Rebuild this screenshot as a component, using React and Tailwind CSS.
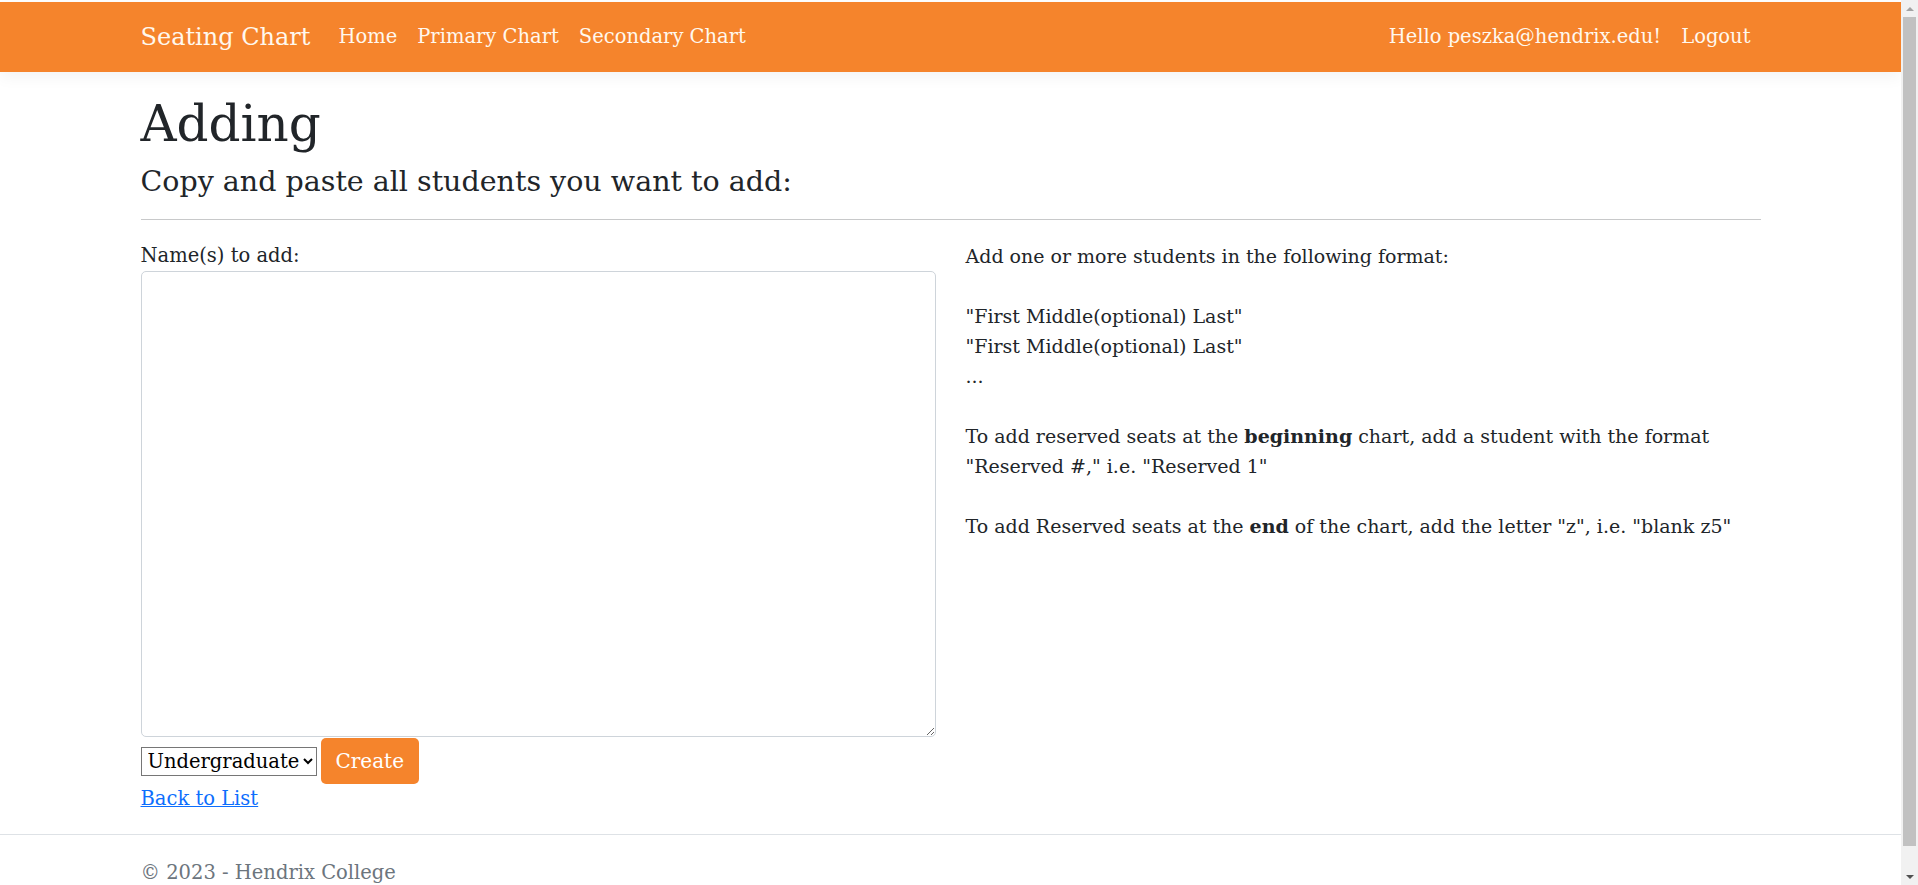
import React from 'react';

const navLinks = ['Home', 'Primary Chart', 'Secondary Chart'];

function FakeScrollbar() {
  return (
    <div className="w-[17px] h-[885px] bg-[#f1f1f1] flex flex-col shrink-0">
      <div className="h-[17px] flex items-center justify-center">
        <div className="w-0 h-0 border-l-[4px] border-r-[4px] border-b-[4px] border-l-transparent border-r-transparent border-b-[#a3a3a3]" />
      </div>
      <div className="h-[829px] mx-[2px] bg-[#c1c1c1]" />
      <div className="flex-1" />
      <div className="h-[17px] flex items-center justify-center">
        <div className="w-0 h-0 border-l-[4px] border-r-[4px] border-t-[4px] border-l-transparent border-r-transparent border-t-[#505050]" />
      </div>
    </div>
  );
}

export default function App() {
  return (
    <div className="h-[885px] overflow-hidden flex bg-white font-['DejaVu_Serif',serif] text-[#212529]">
      <div className="w-[1901px] h-[910px] flex flex-col pt-[2px]">
        {/* Barra de navegación */}
        <nav className="h-[70px] bg-[#f5842c] text-[#fff8ee] shadow-[0_5px_15px_rgba(0,0,0,0.05)]">
          <div className="w-[1620px] mx-auto h-full flex items-center">
            <a className="text-[24px] mr-[18px]">Seating Chart</a>
            <ul className="flex text-[19.5px]">
              {navLinks.map((l) => (
                <li key={l} className="px-[10px]">{l}</li>
              ))}
            </ul>
            <div className="ml-auto flex text-[19.5px]">
              <span className="px-[10px]">Hello peszka@hendrix.edu!</span>
              <a className="px-[10px]">Logout</a>
            </div>
          </div>
        </nav>

        {/* Contenido */}
        <main className="w-[1620px] mx-auto pt-[17px]">
          <h1 className="text-[50px] leading-[70px]">Adding</h1>
          <h4 className="text-[28.5px] leading-[36px] mt-[5px]">Copy and paste all students you want to add:</h4>
          <hr className="mt-[19px] border-t border-[#c8c9ca]" />
          <div className="grid grid-cols-2 gap-[30px] mt-[21px] text-[20px] leading-[30px]">
            <div>
              <label className="block text-[19.5px]">Name(s) to add:</label>
              <textarea className="block w-full h-[466px] border border-[#ced4da] rounded-[5px] bg-white" />
              <div className="flex items-center gap-[4px] mt-px">
                <select className="h-[29px] border border-[#767676] text-black text-[19.5px] leading-[27px] pl-[2px]">
                  <option>Undergraduate</option>
                  <option>Graduate</option>
                </select>
                <button className="h-[46px] px-[15px] rounded-[5px] bg-[#f5842c] text-white text-[20px]">Create</button>
              </div>
              <a className="block text-[#0d6efd] underline w-fit text-[19.5px]">Back to List</a>
            </div>
            <div className="text-[19px]">
              <p>Add one or more students in the following format:</p>
              <br />
              <p>"First Middle(optional) Last"</p>
              <p>"First Middle(optional) Last"</p>
              <p>...</p>
              <br />
              <p>
                <span>To add reserved seats at the </span>
                <b>beginning</b>
                <span> chart, add a student with the format "Reserved #," i.e. "Reserved 1"</span>
              </p>
              <br />
              <p>
                <span>To add Reserved seats at the </span>
                <b>end</b>
                <span> of the chart, add the letter "z", i.e. "blank z5"</span>
              </p>
            </div>
          </div>
        </main>

        {/* Pie de página */}
        <footer className="mt-auto border-t border-[#dee2e6] leading-[75px] text-[19.5px] text-[#6c757d]">
          <div className="w-[1620px] mx-auto">© 2023 - Hendrix College</div>
        </footer>
      </div>
      <FakeScrollbar />
    </div>
  );
}
